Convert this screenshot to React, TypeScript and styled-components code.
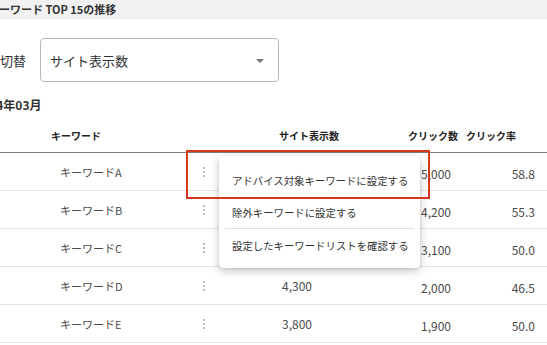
import styled, { createGlobalStyle } from 'styled-components';

// ─── Global ───────────────────────────────────────────────────────────────────

const GlobalStyle = createGlobalStyle`
  html, body {
    margin: 0;
    padding: 0;
    background: #ffffff;
    overflow: hidden;
  }
  body {
    font-family: "Noto Sans CJK JP", "Noto Sans", sans-serif;
    color: #333333;
  }
`;

// ─── Data ─────────────────────────────────────────────────────────────────────

interface Row {
  keyword: string;
  views: string;
  clicks: string;
  rate: string;
}

const rows: Row[] = [
  { keyword: 'キーワードA', views: '', clicks: '5,000', rate: '58.8' },
  { keyword: 'キーワードB', views: '', clicks: '4,200', rate: '55.3' },
  { keyword: 'キーワードC', views: '', clicks: '3,100', rate: '50.0' },
  { keyword: 'キーワードD', views: '4,300', clicks: '2,000', rate: '46.5' },
  { keyword: 'キーワードE', views: '3,800', clicks: '1,900', rate: '50.0' },
];

const menuItems = [
  'アドバイス対象キーワードに設定する',
  '除外キーワードに設定する',
  '設定したキーワードリストを確認する',
];

// ─── Layout ───────────────────────────────────────────────────────────────────

const Page = styled.div`
  position: relative;
  margin-left: -26px;
  width: 573px;
  height: 345px;
`;

const TitleBar = styled.div`
  height: 18px;
  background: #f2f2f2;
  border-bottom: 1px solid #e6e6e6;
  display: flex;
  align-items: center;
  padding-left: 14px;
  font-size: 11px;
  font-weight: 700;
  color: #333;
`;

const FilterRow = styled.div`
  margin-top: 19px;
  display: flex;
  align-items: center;
  gap: 14px;
`;

const FilterLabel = styled.span`
  font-size: 13px;
  color: #333;
  width: 52px;
`;

const Select = styled.div`
  width: 239px;
  height: 44px;
  box-sizing: border-box;
  border: 1px solid #b8b8b8;
  border-radius: 4px;
  display: flex;
  align-items: center;
  justify-content: space-between;
  padding: 0 14px 0 9px;
  font-size: 13px;
  color: #333;
`;

const Caret = styled.span`
  width: 0;
  height: 0;
  border-left: 4px solid transparent;
  border-right: 4px solid transparent;
  border-top: 4px solid #767676;
  margin-top: 2px;
`;

const DateTitle = styled.div`
  margin-top: 15px;
  padding-left: 1px;
  height: 16px;
  line-height: 16px;
  font-size: 12px;
  font-weight: 700;
  color: #333;
`;

// ─── Table ────────────────────────────────────────────────────────────────────

const columns = '46px 170px 29px 161px 80px 87px';

const HeadRow = styled.div`
  margin-top: 5px;
  height: 34px;
  display: grid;
  grid-template-columns: ${columns};
  align-items: center;
  border-bottom: 1px solid #7a7a7a;
  font-size: 10px;
  font-weight: 700;
  color: #222;
`;

const HeadCell = styled.div<{ $pad?: number }>`
  padding-left: ${({ $pad }) => $pad ?? 0}px;
  white-space: nowrap;
`;

const BodyRow = styled.div`
  height: 37px;
  display: grid;
  grid-template-columns: ${columns};
  align-items: center;
  border-bottom: 1px solid #e2e2e2;
  font-size: 11px;
  color: #4a4a4a;
`;

const Cell = styled.div<{ $pad?: number; $right?: boolean; $drop?: number }>`
  padding-left: ${({ $pad }) => $pad ?? 0}px;
  padding-right: ${({ $right }) => ($right ? 12 : 0)}px;
  padding-top: ${({ $drop }) => $drop ?? 0}px;
  text-align: ${({ $right }) => ($right ? 'right' : 'left')};
  white-space: nowrap;
`;

const NumCell = styled(Cell)`
  font-size: 12px;
`;

const KebabCell = styled.div`
  display: flex;
  justify-content: center;
  padding-right: 1px;
`;

function Kebab() {
  return (
    <svg width="4" height="12" viewBox="0 0 4 12">
      <circle cx="2" cy="2" r="0.9" fill="#9a9a9a" />
      <circle cx="2" cy="6" r="0.9" fill="#9a9a9a" />
      <circle cx="2" cy="10" r="0.9" fill="#9a9a9a" />
    </svg>
  );
}

// ─── Overlays: context menu + annotation ──────────────────────────────────────

const Menu = styled.div`
  position: absolute;
  left: 245px;
  top: 156px;
  width: 201px;
  box-sizing: border-box;
  padding: 8px 0 7px;
  background: #ffffff;
  border-radius: 4px;
  box-shadow: 0 3px 10px rgba(0, 0, 0, 0.22), 0 1px 3px rgba(0, 0, 0, 0.1);
`;

const MenuItem = styled.div`
  height: 32px;
  display: flex;
  align-items: center;
  padding-left: 13px;
  font-size: 10.4px;
  color: #333;
  white-space: nowrap;
`;

const MenuDivider = styled.div`
  height: 1px;
  margin: 0 6px;
  background: #e0e0e0;
`;

const Highlight = styled.div`
  position: absolute;
  left: 212px;
  top: 150px;
  width: 244px;
  height: 49px;
  box-sizing: border-box;
  border: 2px solid #d6371f;
  pointer-events: none;
`;

// ─── App ──────────────────────────────────────────────────────────────────────

export default function App() {
  return (
    <>
      <GlobalStyle />
      <Page>
        <TitleBar>キーワード TOP 15の推移</TitleBar>

        <FilterRow>
          <FilterLabel>表示切替</FilterLabel>
          <Select>
            <span>サイト表示数</span>
            <Caret />
          </Select>
        </FilterRow>

        <DateTitle>2024年03月</DateTitle>

        <HeadRow>
          <HeadCell />
          <HeadCell $pad={31}>キーワード</HeadCell>
          <HeadCell />
          <HeadCell $pad={60}>サイト表示数</HeadCell>
          <HeadCell $pad={28}>クリック数</HeadCell>
          <HeadCell $pad={6}>クリック率</HeadCell>
        </HeadRow>

        {rows.map((r) => (
          <BodyRow key={r.keyword}>
            <Cell />
            <Cell $pad={40}>{r.keyword}</Cell>
            <KebabCell>
              <Kebab />
            </KebabCell>
            <NumCell $pad={63}>{r.views}</NumCell>
            <NumCell $pad={41} $drop={3}>{r.clicks}</NumCell>
            <NumCell $right $drop={3}>{r.rate}</NumCell>
          </BodyRow>
        ))}

        <Menu>
          <MenuItem>{menuItems[0]}</MenuItem>
          <MenuItem>{menuItems[1]}</MenuItem>
          <MenuDivider />
          <MenuItem>{menuItems[2]}</MenuItem>
        </Menu>

        <Highlight />
      </Page>
    </>
  );
}
